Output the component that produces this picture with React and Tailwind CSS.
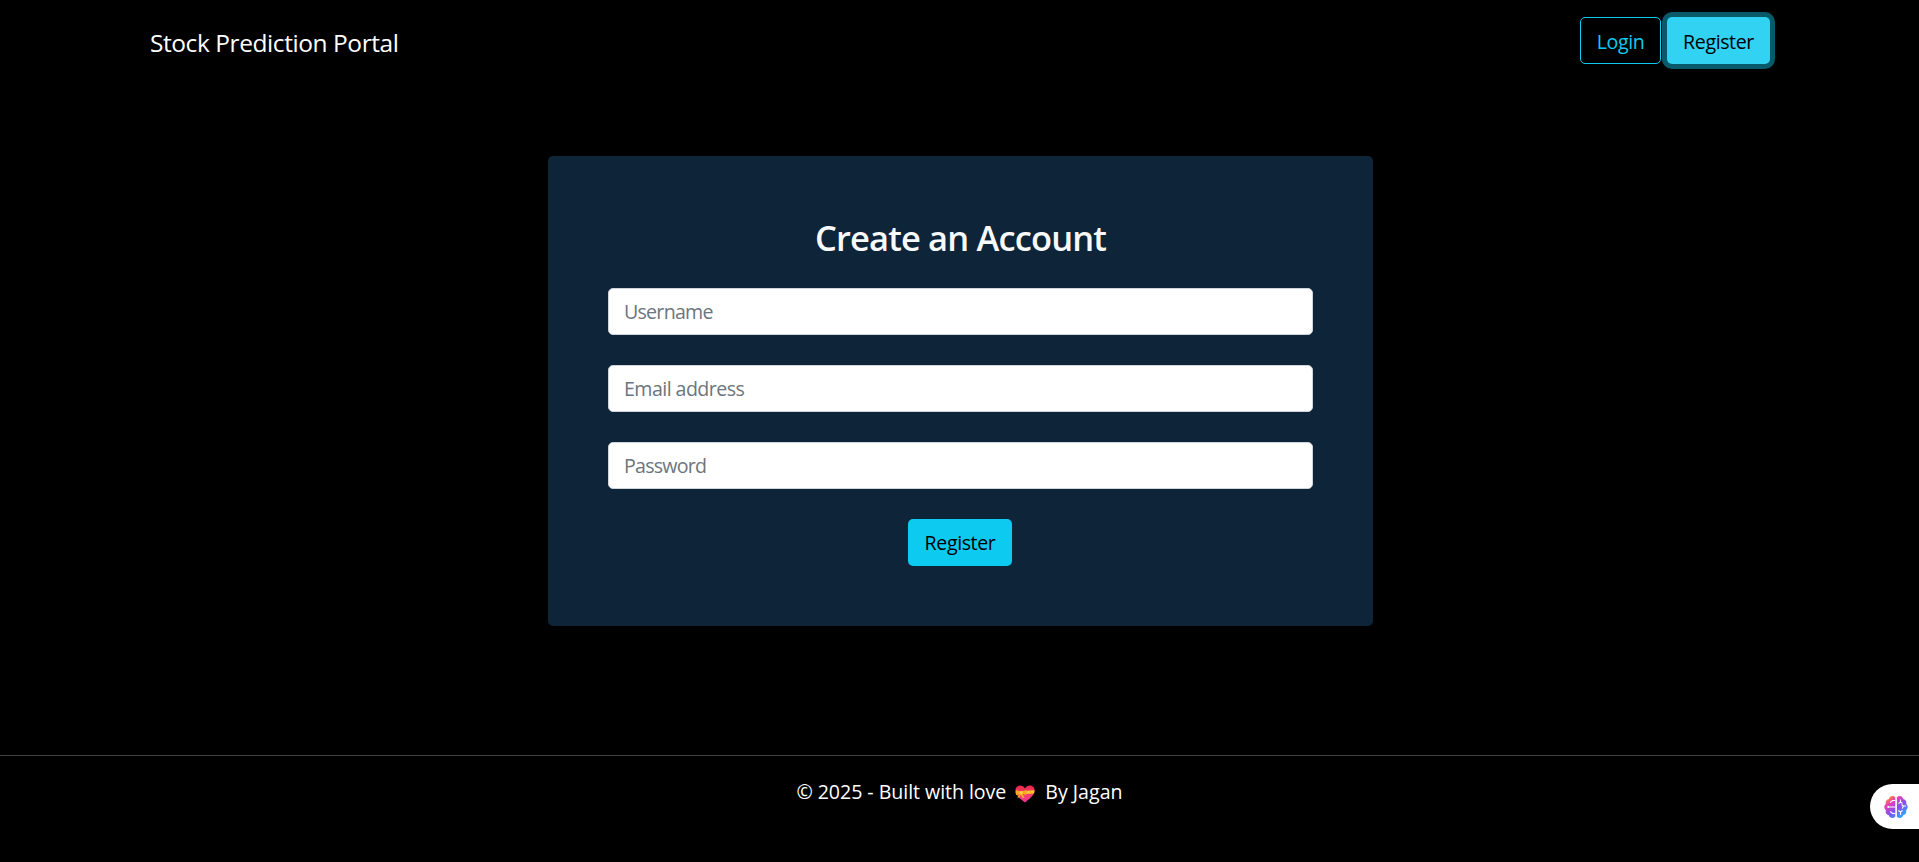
const inputClass =
  "block h-[47px] w-full rounded-[5px] border border-[#ced4da] bg-white px-[15px] pb-[1px] text-[19.6px] text-[#212529] outline-none placeholder:text-[#6c757d] placeholder:opacity-100";

function GiftHeart() {
  return (
    <svg viewBox="0 0 20 18" className="mr-[10px] ml-[9px] mt-[3px] h-[18px] w-[20px] shrink-0">
      <defs>
        <linearGradient id="heart" x1="0" y1="0" x2="0" y2="1">
          <stop offset="0" stopColor="#e8274b" />
          <stop offset="0.5" stopColor="#f8406a" />
          <stop offset="1" stopColor="#f0309a" />
        </linearGradient>
      </defs>
      <path d="M10 17.5C6 14.2 0.4 10.6 0.4 5.6C0.4 2.6 2.6 0.6 5.2 0.6C7.2 0.6 9 1.7 10 3.400C11 1.700 12.800 0.600 14.800 0.600C17.400 0.600 19.600 2.600 19.600 5.600C19.600 10.600 14 14.200 10 17.500Z" fill="url(#heart)" />
      <path d="M0.500 6.600L19.600 5.200L19 8.600L1.200 9.400Z" fill="#fcc52e" />
      <path d="M6 7.400L1.800 5C.6 5.400.4 9.400 1.600 10.200zM6.400 7.400l4-2.400c1.400.6 1.400 4.400 0 5zM5.600 8l-3.400 4.600 2 .2 1.600-3 1.800 3.400 2-.8L7 8z" fill="#f9a825" />
      <circle cx="6.100" cy="7.700" r="1.300" fill="#ffd54a" />
    </svg>
  );
}

function Brain() {
  return (
    <svg viewBox="0 0 24 24" className="h-[24px] w-[24px]">
      <defs>
        <linearGradient id="brain" x1="0.15" y1="0.05" x2="0.85" y2="0.95">
          <stop offset="0" stopColor="#ff9a1f" />
          <stop offset="0.22" stopColor="#f03fb0" />
          <stop offset="0.55" stopColor="#8a4df0" />
          <stop offset="1" stopColor="#1fb6ff" />
        </linearGradient>
      </defs>
      <path d="M11.300 2.300v19.400C9 24 5.600 23.200 4.800 20.300 2.400 19.800 1.100 17.500 1.900 15.200-.2 13.500-.2 10.500 1.800 9 1.100 6.500 2.600 4.200 4.800 3.900 5.600.8 9.300 0 11.300 2.300zM12.900 2.300c2-2.300 5.500-1.500 6.300 1.600 2.200.3 3.700 2.600 3 5.100 2 1.500 2 4.500-.1 6.200.8 2.300-.5 4.600-2.900 5.100-.8 2.900-4 3.700-6.300 1.400z" fill="url(#brain)" />
      <path d="M11.300 5.500H8.500L6.200 7.500M11.300 12H4M11.300 18.500H8.500l-2.300-2M16.500 4.500v2.500l2 1.500M16.500 7L14.500 8.700M22 11h-2.500l-1.300 2.500M19.500 11l-2-1.500M16.500 20v-3l2-1.500M16.500 17l-2.300-1.500" fill="none" stroke="white" strokeWidth="1.100" />
      <circle cx="4.200" cy="12" r="0.900" fill="white" />
    </svg>
  );
}

export default function App() {
  return (
    <div className="flex h-[862px] flex-col overflow-hidden bg-black font-['Open_Sans',sans-serif] text-[19.6px] text-white">
      <nav className="flex h-[81px] shrink-0 items-center justify-between pr-[149px] pl-[150px]">
        <a className="mt-[5px] text-[24.5px] tracking-[-0.43px] whitespace-nowrap">Stock Prediction Portal</a>
        <div className="flex gap-[6px] tracking-[-0.4px]">
          <button className="h-[47px] w-[81px] rounded-[5px] border border-[#0dcaf0] pt-[2px] text-[#0dcaf0]">Login</button>
          <button className="h-[47px] w-[103px] rounded-[5px] bg-[#31d2f2] pt-[2px] text-black shadow-[0_0_0_5px_#085a69]">Register</button>
        </div>
      </nav>
      <main className="mt-[75px] ml-[548px] h-[470px] w-[825px] shrink-0 rounded-[5px] bg-[#0e2438] p-[60px]">
        <h1 className="mb-[29px] pt-[1px] text-center text-[34.5px] leading-[42px] font-semibold tracking-[-0.85px] text-[#f8f9fa]">Create an Account</h1>
        <form className="flex flex-col items-center gap-[30px]">
          <input className={`${inputClass} tracking-[-0.75px]`} placeholder="Username" />
          <input className={`${inputClass} tracking-[-0.55px]`} placeholder="Email address" />
          <input className={`${inputClass} tracking-[-0.75px]`} placeholder="Password" />
          <button type="button" className="mr-[1px] h-[47px] w-[104px] rounded-[5px] bg-[#0dcaf0] pt-[1px] tracking-[-0.4px] text-black">Register</button>
        </form>
      </main>
      <footer className="mt-[129px] flex grow items-start justify-between border-t border-[#404040]">
        <div className="w-[49px]" />
        <p className="mt-[21px] flex items-center leading-[30px] whitespace-nowrap">
          <span className="tracking-[-0.05px]">© 2025 - Built with love</span>
          <GiftHeart />
          <span>By Jagan</span>
        </p>
        <div className="mt-[28px] flex h-[45px] w-[49px] items-center rounded-l-full bg-white pl-[14px]">
          <Brain />
        </div>
      </footer>
    </div>
  );
}
